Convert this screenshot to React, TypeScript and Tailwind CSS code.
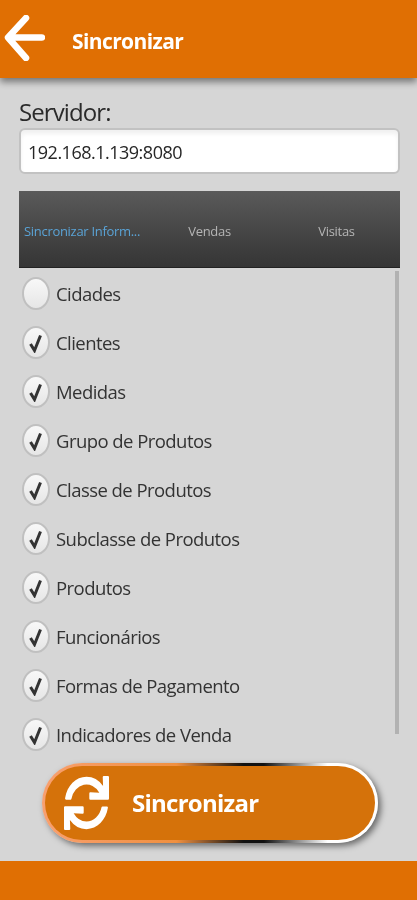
import React from "react";
import { FaSync } from "react-icons/fa";

const items: [string, boolean][] = [
  ["Cidades", false],
  ["Clientes", true],
  ["Medidas", true],
  ["Grupo de Produtos", true],
  ["Classe de Produtos", true],
  ["Subclasse de Produtos", true],
  ["Produtos", true],
  ["Funcionários", true],
  ["Formas de Pagamento", true],
  ["Indicadores de Venda", true],
];

function Radio({ checked }: { checked: boolean }) {
  return (
    <div className="w-[28px] h-[33px] rounded-[50%] bg-gradient-to-b from-[#f8f8f8] to-[#e6e6e6] border-2 border-[#c0c0c0] flex items-center justify-center shrink-0">
      {checked && (
        <svg width="16" height="20" viewBox="0 0 16 20">
          <path d="M2.5 11 L6.5 17.5 L12.5 2.5" fill="none" stroke="#333" strokeWidth="3" />
        </svg>
      )}
    </div>
  );
}

export default function App() {
  return (
    <div className="w-[417px] h-[900px] flex flex-col bg-[#d6d6d6] overflow-hidden blur-[0.7px] font-['Open_Sans','Liberation_Sans',sans-serif]">
      <header className="h-[78px] shrink-0 bg-[#e06f03] shadow-[0_4px_7px_rgba(0,0,0,0.45)] flex items-center pl-[4px] z-10">
        <svg width="41" height="46" viewBox="0 0 41 46" className="mb-[3px]">
          <path d="M38 22.5 H6 M22 3 L4 22.5 L22 43" fill="none" stroke="#fff" strokeWidth="6.5" strokeLinecap="round" strokeLinejoin="round" />
        </svg>
        <span className="ml-[27px] pt-[6px] text-[21px] font-bold text-white tracking-[-0.6px]">Sincronizar</span>
      </header>

      <main className="flex-1 flex flex-col px-[19px] min-h-0">
        <label className="mt-[18px] h-[32px] text-[24px] leading-[32px] text-[#2a2a2a] tracking-[-0.9px]">Servidor:</label>
        <div className="h-[46px] w-[381px] rounded-[6px] border-2 border-[#c2c2c2] bg-white flex items-center pl-[7px] pt-[3px] text-[18px] text-[#262626] tracking-[-0.5px] shadow-[inset_0_4px_4px_rgba(0,0,0,0.06)]">
          192.168.1.139:8080
        </div>

        <div className="mt-[17px] pt-[5px] h-[77px] w-[381px] shrink-0 grid grid-cols-3 items-center bg-gradient-to-b from-[#5a5a5a] to-[#353535] border-b border-[#222] text-[13px] tracking-[-0.3px] text-[#b5b5b5]">
          <span className="pl-[5px] text-[#5aa3d6] whitespace-nowrap">Sincronizar Inform...</span>
          <span className="text-center">Vendas</span>
          <span className="text-center">Visitas</span>
        </div>

        <div className="relative h-[494px] w-[381px] pt-[9px]">
          <div className="absolute right-[1px] top-[3px] bottom-[28px] w-[4px] bg-[#b2b2b2]" />
          <ul className="flex flex-col gap-[16px]">
            {items.map(([label, checked]) => (
              <li key={label} className="flex items-center h-[33px] pl-[3px] text-[18.5px] text-[#333] tracking-[-0.55px]">
                <Radio checked={checked} />
                <span className="ml-[6px] whitespace-nowrap">{label}</span>
              </li>
            ))}
          </ul>
        </div>
      </main>

      <div className="h-[98px] shrink-0 flex items-start justify-center pl-[3px] -mt-[4px]">
        <button className="w-[336px] h-[80px] rounded-full p-[3px] bg-[linear-gradient(90deg,#f8a070_0%,#f09040_40%,#111_60%,#111_66%,#fff_85%,#fff_100%)] shadow-[3px_3px_6px_rgba(0,0,0,0.5)]">
          <span className="w-full h-full rounded-full bg-[#d5720a] flex items-center pl-[19px] text-white">
            <FaSync className="w-[45px] h-[54px]" preserveAspectRatio="none" />
            <span className="ml-[23px] text-[24px] font-bold tracking-[-0.75px]">Sincronizar</span>
          </span>
        </button>
      </div>

      <footer className="h-[39px] shrink-0 bg-[#e06f03]" />
    </div>
  );
}
